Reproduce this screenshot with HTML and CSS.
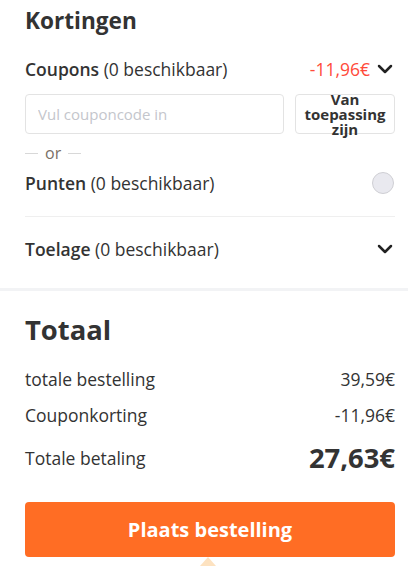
FILE: index.html
```html
<!DOCTYPE html>
<html lang="nl">
<head>
<meta charset="utf-8">
<link rel="stylesheet" href="styles.css">
</head>
<body>
<section class="discounts">
  <h2 class="title">Kortingen</h2>
  <div class="row coupons">
    <span class="label"><b>Coupons</b> (0 beschikbaar)</span>
    <span class="right"><span class="red">-11,96€</span>
      <svg class="chev" viewBox="0 0 16 10" width="16" height="10"><path d="M2 2 L8 8 L14 2" fill="none" stroke="#222" stroke-width="2.5" stroke-linecap="round" stroke-linejoin="round"/></svg>
    </span>
  </div>
  <div class="coupon-form">
    <input class="code" type="text" placeholder="Vul couponcode in">
    <button class="apply">Van toepassing zijn</button>
  </div>
  <div class="or"><span class="dash"></span>or<span class="dash"></span></div>
  <div class="row points">
    <span class="label"><b>Punten</b> (0 beschikbaar)</span>
    <span class="radio"></span>
  </div>
  <div class="row allowance">
    <span class="label"><b>Toelage</b> (0 beschikbaar)</span>
    <svg class="chev" viewBox="0 0 16 10" width="16" height="10"><path d="M2 2 L8 8 L14 2" fill="none" stroke="#222" stroke-width="2.5" stroke-linecap="round" stroke-linejoin="round"/></svg>
  </div>
</section>
<section class="total">
  <h2 class="big">Totaal</h2>
  <div class="trow first"><span>totale bestelling</span><span>39,59€</span></div>
  <div class="trow"><span>Couponkorting</span><span>-11,96€</span></div>
  <div class="trow pay"><span>Totale betaling</span><span class="sum">27,63€</span></div>
  <div class="order-wrap">
    <button class="order">Plaats bestelling</button>
    <span class="tip-arrow"></span>
  </div>
</section>
</body>
</html>
```
FILE: styles.css
```css
* { box-sizing: border-box; }
html, body { margin: 0; padding: 0; background: #fff; }
body {
  font-family: "Open Sans", "Noto Sans", sans-serif;
  color: #333;
  width: 408px;
  height: 566px;
  overflow: hidden;
}
.discounts {
  padding: 6px 13px 27px 25px;
  border-bottom: 3px solid #f2f3f5;
}
.title {
  margin: 0;
  font-size: 22.6px;
  font-weight: 700;
  line-height: 30px;
  color: #333;
}
.row {
  display: flex;
  justify-content: space-between;
  align-items: center;
  font-size: 17.5px;
  line-height: 24px;
}
.label b { font-weight: 600; }
.coupons { margin-top: 21px; }
.right { display: flex; align-items: center; gap: 7px; }
.red { color: #ff4a3a; }
.chev { display: block; margin-right: 2px; }
.coupon-form {
  display: flex;
  gap: 11px;
  margin-top: 13px;
  height: 40px;
}
.code {
  flex: 1;
  min-width: 0;
  height: 40px;
  border: 1px solid #e3e3e3;
  border-radius: 4px;
  padding: 0 12px;
  font-family: inherit;
  font-size: 15px;
  color: #333;
  outline: none;
}
.code::placeholder { color: #c4c6cc; }
.apply {
  width: 100px;
  height: 40px;
  border: 1px solid #e3e3e3;
  border-radius: 4px;
  background: #fff;
  font-family: inherit;
  font-size: 15px;
  font-weight: 700;
  line-height: 15px;
  color: #333;
  padding: 0 2px;
  display: flex;
  align-items: center;
  justify-content: center;
  text-align: center;
}
.or {
  display: flex;
  align-items: center;
  gap: 7px;
  margin-top: 9px;
  font-size: 16px;
  line-height: 20px;
  color: #7a6f66;
}
.dash { width: 13px; height: 1px; background: #d8d8d8; }
.points {
  margin-top: 8px;
  padding-bottom: 21px;
  border-bottom: 1px solid #efefef;
}
.radio {
  width: 22px;
  height: 22px;
  border-radius: 50%;
  background: #e9e9ef;
  border: 1px solid #cfcfd4;
  margin-right: 1px;
}
.allowance { margin-top: 20px; }
.total {
  padding: 21px 13px 0 25px;
}
.big {
  margin: 0;
  font-size: 27.4px;
  font-weight: 700;
  line-height: 36px;
  color: #333;
}
.trow {
  display: flex;
  justify-content: space-between;
  align-items: center;
  font-size: 17.5px;
  line-height: 24px;
}
.trow.first { margin-top: 19px; }
.trow + .trow { margin-top: 12px; }
.trow.pay { margin-top: 13px; }
.sum { font-size: 27.4px; font-weight: 700; line-height: 36px; }
.order-wrap { position: relative; margin-top: 26px; }
.order {
  display: block;
  width: 100%;
  height: 55px;
  border: none;
  border-radius: 4px;
  background: #ff6d24;
  color: #fff;
  font-family: inherit;
  font-size: 20px;
  font-weight: 700;
}
.tip-arrow {
  position: absolute;
  left: 175px;
  top: 55px;
  width: 0;
  height: 0;
  border-left: 8px solid transparent;
  border-right: 8px solid transparent;
  border-bottom: 9px solid #fde2c0;
}
```
